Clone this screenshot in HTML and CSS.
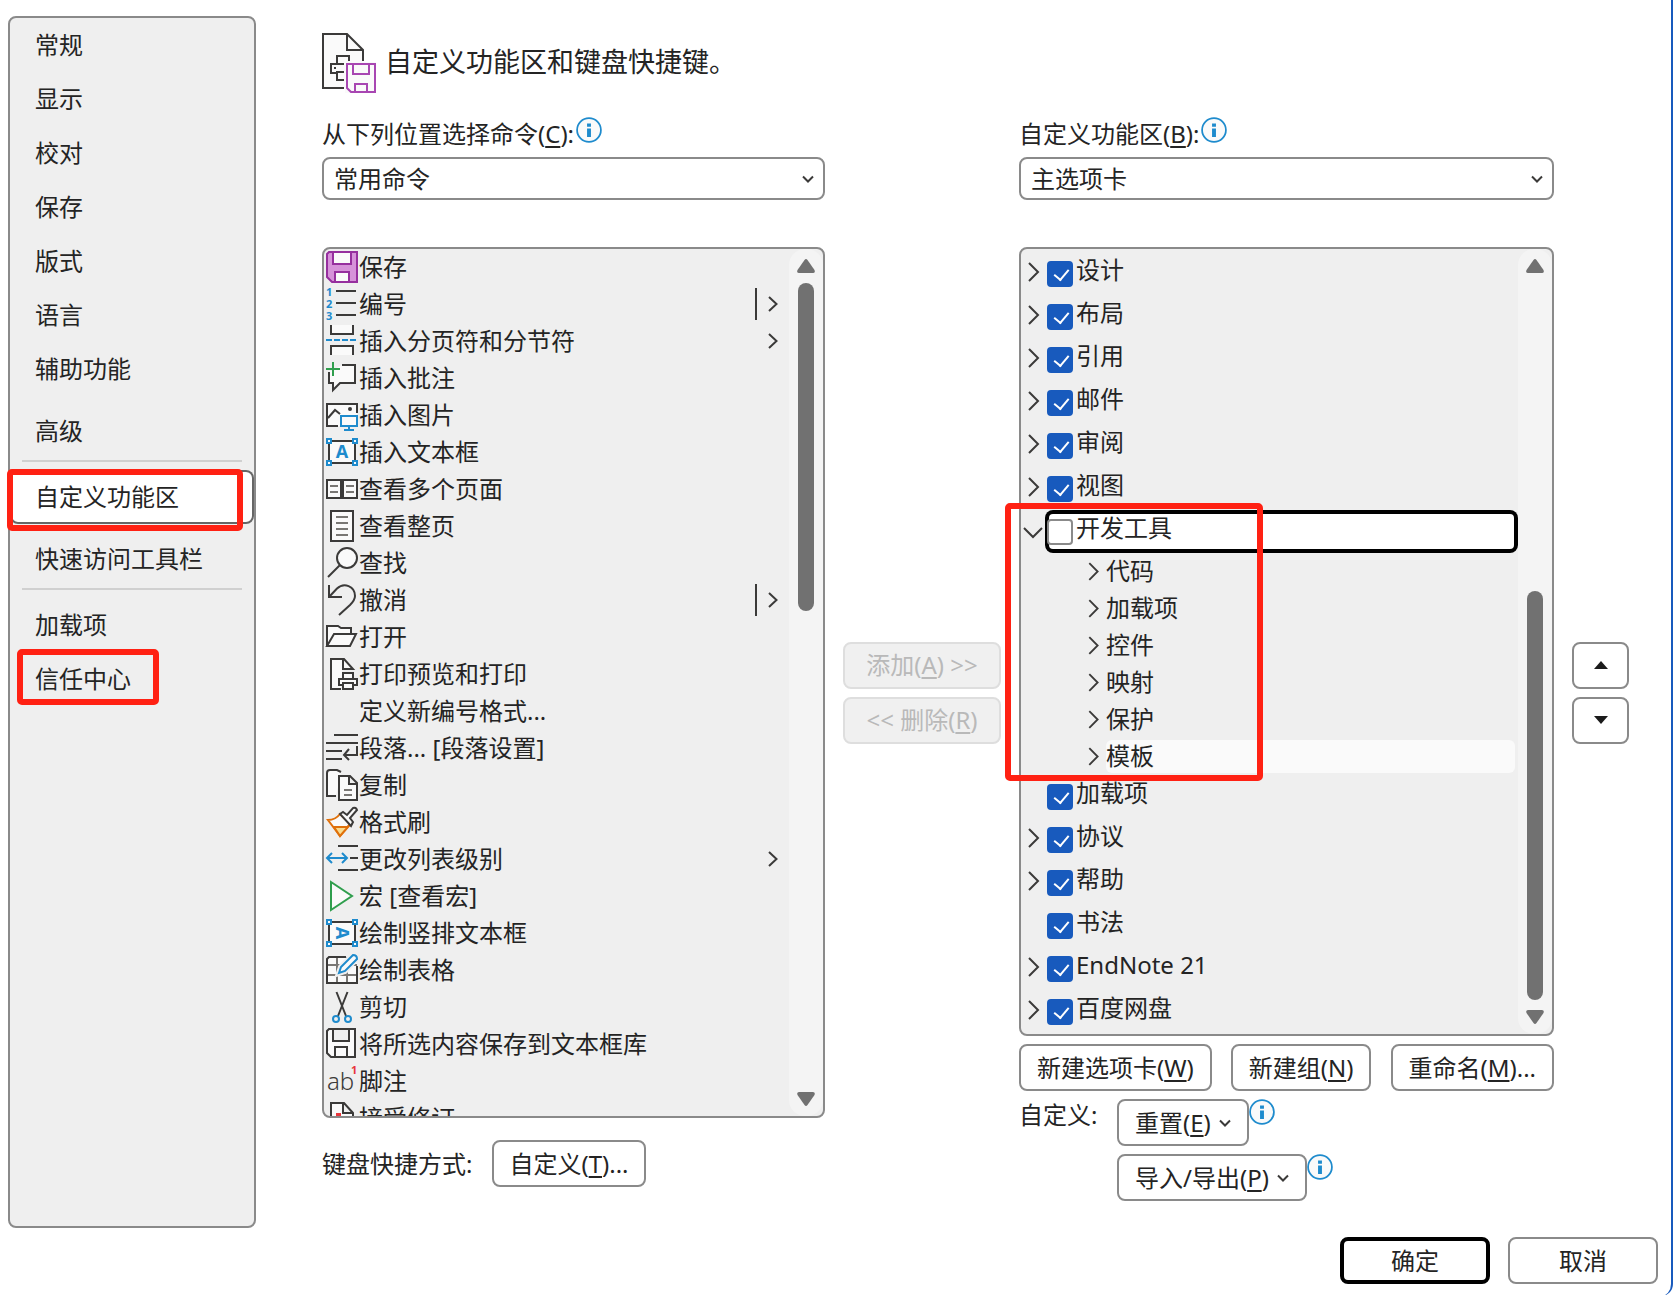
FILE: index.html
```html
<!DOCTYPE html>
<html lang="zh-CN">
<head>
<meta charset="utf-8">
<meta name="viewport" content="width=device-width, initial-scale=1">
<title>选项 - 自定义功能区</title>
<link rel="stylesheet" href="styles.css">
</head>
<body>
<svg class="defs" aria-hidden="true">
  <symbol id="right" viewBox="0 0 24 40"><path class="ink" d="M8 11l9 9-9 9"/></symbol>
  <symbol id="down" viewBox="0 0 24 40"><path class="ink" d="M3 18l9 9 9-9"/></symbol>
  <symbol id="drop" viewBox="0 0 12 8"><path class="ink" d="M1 1.500l5 5 5-5"/></symbol>
  <symbol id="more" viewBox="0 0 24 32"><path class="ink" d="M14 9l7.500 7-7.500 7"/></symbol>
  <symbol id="split" viewBox="0 0 24 32"><path class="ink" d="M1 0v32M14 9l7.500 7-7.500 7"/></symbol>
  <symbol id="tri-up" viewBox="0 0 18 14"><path fill="#717171" d="M7.500 1Q9-1 10.500 1l7 10q1 3-1.500 3H2Q-.5 14 .5 11z"/></symbol>
  <symbol id="tri-down" viewBox="0 0 18 14"><path fill="#717171" d="M7.500 13q1.500 2 3 0l7-10Q18.500 0 16 0H2Q-.5 0 .5 3z"/></symbol>
  <symbol id="info" viewBox="0 0 24 24"><circle cx="12" cy="12" r="11" fill="#fafafa" stroke="#1e8bcd" stroke-width="1.600"/><path fill="#1e8bcd" d="M10.200 6h3.600v3h-3.600zM10.200 10.500h3.600v8h-3.600z"/></symbol>
</svg>

<div class="dialog">
  <div class="body">
    <nav class="nav">
      <a href="#">常规</a>
      <a href="#">显示</a>
      <a href="#">校对</a>
      <a href="#">保存</a>
      <a href="#">版式</a>
      <a href="#">语言</a>
      <a href="#">辅助功能</a>
      <a href="#" class="spaced">高级</a>
      <hr>
      <a href="#" class="current" aria-current="page">自定义功能区<span class="mark mark-ribbon"></span></a>
      <a href="#" class="spaced">快速访问工具栏</a>
      <hr>
      <a href="#">加载项</a>
      <a href="#" class="marked">信任中心<span class="mark mark-trust"></span></a>
    </nav>

    <main class="main">
      <header class="title">
        <svg width="54" height="60" viewBox="0 0 54 60"><path fill="#fafafa" d="M1 1h24l16 16v38H1z"/><path class="ink" d="M22 55H1V1h24l16 16v11M25 1v16h16M15 30v-7h12v5M22 31H9v9h6M22 39h-7v8h7"/><path fill="#3b3a39" d="M12 34h2v2h-2z"/><path fill="#fafafa" d="M23 29h31v31H23z"/><path fill="#fafafa" stroke="#a846b2" stroke-width="2" d="M25 31h28v28H29l-4-4zM31 31v10h16V31M33 59v-8h12v8"/></svg>
        <h1>自定义功能区和键盘快捷键。</h1>
      </header>

      <div class="columns">
        <section class="col">
          <div class="field-label"><label for="source">从下列位置选择命令(<u>C</u>):</label><svg class="info"><use href="#info"/></svg></div>
          <div class="select">
            <select id="source"><option>常用命令</option></select>
            <svg class="drop"><use href="#drop"/></svg>
          </div>
          <div class="list fill">
            <ul class="commands">
              <li><svg class="icon" viewBox="0 0 32 32"><path fill="#d692d9" stroke="#962f9e" stroke-width="2" d="M3 1h28v30H6l-5-5V3z"/><path fill="#fafafa" stroke="#962f9e" stroke-width="2" d="M7 1v12h18V1zM9 31V21h14v10z"/></svg>保存</li>
              <li><svg class="icon" viewBox="0 0 32 32"><g class="num"><text x="0" y="8">1</text><text x="0" y="20">2</text><text x="0" y="32">3</text></g><path class="ink" d="M10 3h20M10 15h20M10 27h20"/></svg>编号<svg class="sub"><use href="#split"/></svg></li>
              <li><svg class="icon" viewBox="0 0 32 32"><path class="ink paper" d="M5 0v9h22V0M5 30v-9h22v9"/><path class="blue" stroke-dasharray="6 2" d="M0 15h30"/></svg>插入分页符和分节符<svg class="sub"><use href="#more"/></svg></li>
              <li><svg class="icon" viewBox="0 0 32 32"><path class="ink paper" d="M16 3h13v18H14l-7 7v-7H3V10"/><path fill="none" stroke="#2f9e4d" stroke-width="2" d="M7 0v14M0 7h14"/></svg>插入批注</li>
              <li><svg class="icon" viewBox="0 0 32 32"><path fill="#fafafa" d="M1 5h30v22H1z"/><path class="ink" d="M12 27H1V5h30v9M2 19l7-8 5 4"/><circle cx="24" cy="10" r="2" fill="#3b3a39"/><path class="blue paper" d="M15 17h16v10H15zM23 27v4M18 31h10"/></svg>插入图片</li>
              <li><svg class="icon" viewBox="0 0 32 32"><path class="ink paper" d="M3 5h26v22H3z"/><path class="blue paper" d="M1 3h4v4H1zM27 3h4v4h-4zM1 25h4v4H1zM27 25h4v4h-4z"/><text class="letter" x="16" y="22">A</text></svg>插入文本框</li>
              <li><svg class="icon" viewBox="0 0 32 32"><path class="ink paper" d="M1 7h30v18H1z"/><path stroke="#3b3a39" stroke-width="4" d="M16 6v20"/><path class="gray" d="M4 13h8M4 19h8M20 13h8M20 19h8"/></svg>查看多个页面</li>
              <li><svg class="icon" viewBox="0 0 32 32"><path class="ink paper" d="M5 1h22v30H5z"/><path class="gray" d="M10 7h12M10 13h12M10 19h12M10 25h12"/></svg>查看整页</li>
              <li><svg class="icon" viewBox="0 0 32 32"><circle class="ink paper" cx="21" cy="11" r="10"/><path class="ink" d="M14 18L2 30"/></svg>查找</li>
              <li><svg class="icon" viewBox="0 0 32 32"><path class="ink" d="M3 1v12h13M3 13l8-8.500C18-2 29 2 29 12c0 4-2 6-5 9L13 31"/></svg>撤消<svg class="sub"><use href="#split"/></svg></li>
              <li><svg class="icon" viewBox="0 0 32 32"><path class="ink paper" d="M1 25V5h11l3 2h10v6M1 25l7-12h22l-6 12z"/></svg>打开</li>
              <li><svg class="icon" viewBox="0 0 32 32"><path class="ink paper" d="M15 31H5V1h13l9 10H17V1"/><path class="ink paper" d="M17 21v-6h10v6M17 27h-4v-6h18v6h-4M17 25h10v6H17z"/></svg>打印预览和打印</li>
              <li><span class="icon"></span>定义新编号格式...</li>
              <li><svg class="icon" viewBox="0 0 32 32"><path class="ink" d="M8 3h24M0 11h32M0 19h16M0 27h16M31 14v9H18M23 17l-5 6 5 5"/></svg>段落... [段落设置]</li>
              <li><svg class="icon" viewBox="0 0 32 32"><path class="ink paper" d="M10 27H1V4q0-3 3-3h7l4 2"/><path class="ink paper" d="M13 7h11l7 7v17H13zM23 7v8h8"/><path class="gray" d="M18 21h8M18 26h8"/></svg>复制</li>
              <li><svg class="icon" viewBox="0 0 32 32"><path fill="#fafafa" stroke="#e0700a" stroke-width="2" d="M2 14c5 0 9-2 12-6l10 10-10 12z"/><path fill="#f9dc8f" stroke="#e0700a" stroke-width="2" d="M8 21l14 0-8 9z"/><path class="ink paper" d="M14 8l3-2 4 3 6-7q3-1 4 2l-7 8 3 4-2 4z"/></svg>格式刷</li>
              <li><svg class="icon" viewBox="0 0 32 32"><path class="ink" d="M12 3h20M24 15h8M12 27h20"/><path class="blue" d="M1 15h20M6 10l-5 5 5 5M16 10l5 5-5 5"/></svg>更改列表级别<svg class="sub"><use href="#more"/></svg></li>
              <li><svg class="icon" viewBox="0 0 32 32"><path fill="#fafafa" stroke="#2f9e4d" stroke-width="2" d="M5 2l21 14L5 30z"/></svg>宏 [查看宏]</li>
              <li><svg class="icon" viewBox="0 0 32 32"><path class="ink paper" d="M3 5h26v22H3z"/><path class="blue paper" d="M1 3h4v4H1zM27 3h4v4h-4zM1 25h4v4H1zM27 25h4v4h-4z"/><text class="letter" x="16" y="22" transform="rotate(90 16 16)">A</text></svg>绘制竖排文本框</li>
              <li><svg class="icon" viewBox="0 0 32 32"><path fill="#fafafa" d="M1 3h30v26H1z"/><path class="gray" d="M11 3v26M21 3v26M1 11h30M1 21h30"/><path class="ink" d="M20 3H3L1 5v24h30V12"/><path fill="#fafafa" stroke="#efefef" stroke-width="6" d="M13 19l2-6L27 1l4 3-12 13z"/><path class="blue paper" d="M13 19l2-6L27 1q4 0 4 4L19 17z"/></svg>绘制表格</li>
              <li><svg class="icon" viewBox="0 0 32 32"><path class="ink" d="M10.500 1L20 25M21.500 1L12 25"/><circle class="blue" cx="10" cy="28" r="3"/><circle class="blue" cx="22" cy="28" r="3"/></svg>剪切</li>
              <li><svg class="icon" viewBox="0 0 32 32"><path class="ink paper" d="M3 1h26v28H5l-4-4V3zM7 1v12h16V1M9 29V19h12v10"/></svg>将所选内容保存到文本框库</li>
              <li><svg class="icon" viewBox="0 0 32 32"><text class="ab" x="1" y="25">ab</text><text class="note" x="25" y="9">1</text></svg>脚注</li>
              <li><svg class="icon" viewBox="0 0 32 32"><path class="ink paper" d="M5 31V1h13l9 10v20zM17 1v10h10"/><path fill="#e8363c" d="M10 11h5v8h-5z"/></svg>接受修订</li>
            </ul>
            <div class="scroll">
              <svg class="arrow"><use href="#tri-up"/></svg>
              <div class="lane"><div class="thumb" style="height:41%"></div></div>
              <svg class="arrow"><use href="#tri-down"/></svg>
            </div>
          </div>
          <div class="keyboard">
            <span>键盘快捷方式:</span>
            <button type="button" class="btn">自定义(<u>T</u>)...</button>
          </div>
        </section>

        <div class="stack">
          <button type="button" class="btn" disabled>添加(<u>A</u>) &gt;&gt;</button>
          <button type="button" class="btn" disabled>&lt;&lt; 删除(<u>R</u>)</button>
        </div>

        <section class="col">
          <div class="field-label"><label for="target">自定义功能区(<u>B</u>):</label><svg class="info"><use href="#info"/></svg></div>
          <div class="select">
            <select id="target"><option>主选项卡</option></select>
            <svg class="drop"><use href="#drop"/></svg>
          </div>
          <div class="list">
            <ul class="tree">
              <li class="tab"><svg class="twist"><use href="#right"/></svg><label><input type="checkbox" checked>设计</label></li>
              <li class="tab"><svg class="twist"><use href="#right"/></svg><label><input type="checkbox" checked>布局</label></li>
              <li class="tab"><svg class="twist"><use href="#right"/></svg><label><input type="checkbox" checked>引用</label></li>
              <li class="tab"><svg class="twist"><use href="#right"/></svg><label><input type="checkbox" checked>邮件</label></li>
              <li class="tab"><svg class="twist"><use href="#right"/></svg><label><input type="checkbox" checked>审阅</label></li>
              <li class="tab"><svg class="twist"><use href="#right"/></svg><label><input type="checkbox" checked>视图</label></li>
              <li class="open">
                <div class="tab selected"><svg class="twist"><use href="#down"/></svg><label><input type="checkbox">开发工具</label></div>
                <ul class="groups">
                  <li><svg class="twist"><use href="#right"/></svg><span>代码</span></li>
                  <li><svg class="twist"><use href="#right"/></svg><span>加载项</span></li>
                  <li><svg class="twist"><use href="#right"/></svg><span>控件</span></li>
                  <li><svg class="twist"><use href="#right"/></svg><span>映射</span></li>
                  <li><svg class="twist"><use href="#right"/></svg><span>保护</span></li>
                  <li><svg class="twist"><use href="#right"/></svg><span class="hover">模板</span></li>
                </ul>
                <span class="mark mark-dev"></span>
              </li>
              <li class="tab"><span class="twist"></span><label><input type="checkbox" checked>加载项</label></li>
              <li class="tab"><svg class="twist"><use href="#right"/></svg><label><input type="checkbox" checked>协议</label></li>
              <li class="tab"><svg class="twist"><use href="#right"/></svg><label><input type="checkbox" checked>帮助</label></li>
              <li class="tab"><span class="twist"></span><label><input type="checkbox" checked>书法</label></li>
              <li class="tab"><svg class="twist"><use href="#right"/></svg><label><input type="checkbox" checked>EndNote 21</label></li>
              <li class="tab"><svg class="twist"><use href="#right"/></svg><label><input type="checkbox" checked>百度网盘</label></li>
            </ul>
            <div class="scroll">
              <svg class="arrow"><use href="#tri-up"/></svg>
              <div class="lane end"><div class="thumb" style="height:57%"></div></div>
              <svg class="arrow"><use href="#tri-down"/></svg>
            </div>
          </div>
          <div class="tab-actions">
            <button type="button" class="btn">新建选项卡(<u>W</u>)</button>
            <button type="button" class="btn">新建组(<u>N</u>)</button>
            <button type="button" class="btn">重命名(<u>M</u>)...</button>
          </div>
          <div class="custom">
            <span class="custom-label">自定义:</span>
            <div class="custom-row"><button type="button" class="btn">重置(<u>E</u>)<svg class="caret"><use href="#drop"/></svg></button><svg class="info"><use href="#info"/></svg></div>
            <div class="custom-row"><button type="button" class="btn">导入/导出(<u>P</u>)<svg class="caret"><use href="#drop"/></svg></button><svg class="info"><use href="#info"/></svg></div>
          </div>
        </section>

        <div class="stack">
          <button type="button" class="btn" aria-label="上移"><svg width="14" height="8"><path fill="#1b1b1b" d="M7 0l7 8H0z"/></svg></button>
          <button type="button" class="btn" aria-label="下移"><svg width="14" height="8"><path fill="#1b1b1b" d="M0 0h14L7 8z"/></svg></button>
        </div>
      </div>
    </main>
  </div>

  <footer class="footer">
    <button type="submit" class="btn primary">确定</button>
    <button type="button" class="btn">取消</button>
  </footer>
</div>
</body>
</html>
```
FILE: styles.css
```css
* {
  box-sizing: border-box;
}

body {
  margin: 0;
  background: #fff;
  color: #242424;
  font: 24px/36px "Noto Sans", "Noto Sans CJK SC", sans-serif;
}

ul {
  margin: 0;
  padding: 0;
  list-style: none;
}

svg {
  display: block;
  flex: none;
}

.defs {
  position: absolute;
  width: 0;
  height: 0;
}

u {
  text-underline-offset: 3px;
  text-decoration-thickness: 2px;
}

.ink {
  fill: none;
  stroke: #3b3a39;
  stroke-width: 2;
}

.blue {
  fill: none;
  stroke: #1e8bcd;
  stroke-width: 2;
}

.gray {
  fill: none;
  stroke: #797774;
  stroke-width: 2;
}

.paper {
  fill: #fafafa;
}

.dialog {
  display: flex;
  flex-direction: column;
  min-height: 100vh;
  border-right: 2px solid #185abd;
  border-bottom-right-radius: 12px;
}

.body {
  display: flex;
  flex: 1;
}

/* Category list */
.nav {
  width: 248px;
  flex: none;
  margin: 16px 0 0 8px;
  border: 2px solid #8a8a8a;
  border-radius: 8px;
  background: #efefef;
}

.nav a {
  display: block;
  padding-left: 25px;
  color: inherit;
  line-height: 54px;
  text-decoration: none;
}

.nav .spaced {
  margin-top: 8px;
}

.nav hr {
  height: 2px;
  margin: 2px 12px 8px;
  border: 0;
  background: #d0d0d0;
}

.nav .current {
  position: relative;
  border-radius: 8px;
  background: #fff;
  box-shadow: inset 0 0 0 2px #666;
}

.nav .marked {
  position: relative;
}

.mark {
  position: absolute;
  z-index: 2;
  border: 6px solid #ff2113;
  border-radius: 5px;
  pointer-events: none;
}

.mark-ribbon {
  inset: -1px 11px -7px -3px;
}

.mark-trust {
  inset: -3px 95px 1px 7px;
}

.mark-dev {
  top: -7px;
  bottom: -6px;
  left: -16px;
  width: 258px;
}

/* Page */
.main {
  flex: 1;
  padding: 33px 42px 27px 66px;
}

.title {
  display: flex;
  gap: 9px;
  margin-bottom: 21px;
}

.title h1 {
  margin: 0;
  font-size: 27px;
  font-weight: 400;
  line-height: 58px;
}

.columns {
  display: grid;
  grid-template-columns: minmax(0, 503fr) 158px minmax(0, 535fr) 57px;
  gap: 18px;
}

.col {
  display: flex;
  flex-direction: column;
}

.field-label {
  display: flex;
  gap: 2px;
  line-height: 40px;
}

.info {
  width: 26px;
  height: 26px;
}

.field-label .info {
  margin-top: 3px;
}

.select {
  position: relative;
  margin-top: 3px;
}

.select select {
  display: block;
  width: 100%;
  height: 43px;
  padding: 0 10px;
  border: 2px solid #8a8a8a;
  border-radius: 8px;
  appearance: none;
  background: #fff;
  color: inherit;
  font: inherit;
}

.drop {
  position: absolute;
  top: 18px;
  right: 11px;
  width: 12px;
  height: 8px;
}

.list {
  display: flex;
  margin-top: 47px;
  border: 2px solid #8a8a8a;
  border-radius: 8px;
  background: #efefef;
}

.fill {
  flex: 1;
  contain: size;
  overflow: hidden;
}

.commands {
  flex: 1;
}

.commands li {
  display: flex;
  align-items: center;
  gap: 1px;
  height: 37px;
  padding: 0 10px 1px 2px;
  line-height: 34px;
}

.icon {
  width: 32px;
  height: 32px;
  overflow: visible;
}

.sub {
  width: 24px;
  height: 32px;
  margin-left: auto;
}

.num {
  fill: #1e8bcd;
  font-size: 11px;
  font-weight: 700;
}

.letter {
  fill: #1e8bcd;
  font-size: 18px;
  font-weight: 700;
  text-anchor: middle;
}

.ab {
  fill: #3b3a39;
  font-size: 24px;
  font-weight: 300;
}

.note {
  fill: #e8363c;
  font-size: 11px;
  font-weight: 700;
}

.scroll {
  display: flex;
  flex-direction: column;
  align-items: center;
  width: 34px;
  padding: 10px 0;
  border-radius: 16px;
  background: #f4f4f4;
}

.arrow {
  width: 18px;
  height: 14px;
}

.lane {
  display: flex;
  flex: 1;
  align-items: flex-start;
  margin: 10px 0;
}

.lane.end {
  align-items: flex-end;
}

.thumb {
  width: 16px;
  border-radius: 8px;
  background: #717171;
}

/* Tab tree */
.tree {
  flex: 1;
  padding: 3px 0 1px;
}

.tab {
  display: flex;
  height: 43px;
}

.twist {
  width: 24px;
  height: 40px;
  flex: none;
}

.tab label {
  display: flex;
  flex: 1;
  gap: 3px;
  padding-left: 2px;
}

.tab input {
  position: relative;
  width: 26px;
  height: 26px;
  margin: 9px 0 0;
  border: 2px solid #8a8a8a;
  border-radius: 4px;
  appearance: none;
  background: #fff;
}

.tab input:checked {
  border-color: #185abd;
  background: #185abd;
}

.tab input:checked::after {
  content: "";
  position: absolute;
  top: 3px;
  left: 8px;
  width: 7px;
  height: 12px;
  border: solid #fff;
  border-width: 0 2px 2px 0;
  transform: rotate(40deg);
}

.selected label {
  border-radius: 8px;
  background: #fff;
  box-shadow: inset 0 0 0 4px #000;
}

.open {
  position: relative;
}

.groups li {
  display: flex;
  align-items: center;
  gap: 1px;
  height: 37px;
  padding: 0 3px 0 60px;
}

.groups .twist {
  height: 37px;
}

.groups span {
  flex: 1;
  padding-bottom: 2px;
  line-height: 31px;
}

.hover {
  border-radius: 6px;
  background: #fafafa;
}

/* Buttons */
.btn {
  display: inline-flex;
  align-items: center;
  justify-content: center;
  height: 47px;
  padding: 0 15px;
  border: 2px solid #8a8a8a;
  border-radius: 8px;
  background: #fff;
  color: inherit;
  font: inherit;
  white-space: pre;
}

.btn:disabled {
  border-color: #dedede;
  background: #f0f0f0;
  color: #b9b9b9;
}

.caret {
  width: 12px;
  height: 8px;
  margin-left: 8px;
}

.stack {
  display: flex;
  flex-direction: column;
  align-self: center;
  gap: 8px;
  padding-top: 70px;
}

.stack .btn {
  padding: 0;
}

.keyboard {
  display: flex;
  align-items: center;
  gap: 20px;
  margin: 22px 0 14px;
}

.tab-actions {
  display: flex;
  justify-content: space-between;
  margin-top: 8px;
}

.tab-actions .btn,
.custom .btn {
  padding: 0 16px;
}

.custom {
  display: grid;
  grid-template-columns: 98px 1fr;
  gap: 8px 0;
  margin-top: 8px;
}

.custom-label {
  line-height: 32px;
}

.custom-row {
  display: flex;
  grid-column: 2;
}

.footer {
  display: flex;
  justify-content: flex-end;
  gap: 18px;
  padding: 9px 13px 12px;
}

.footer .btn {
  width: 150px;
}

.footer .primary {
  border: 4px solid #000;
}
```
